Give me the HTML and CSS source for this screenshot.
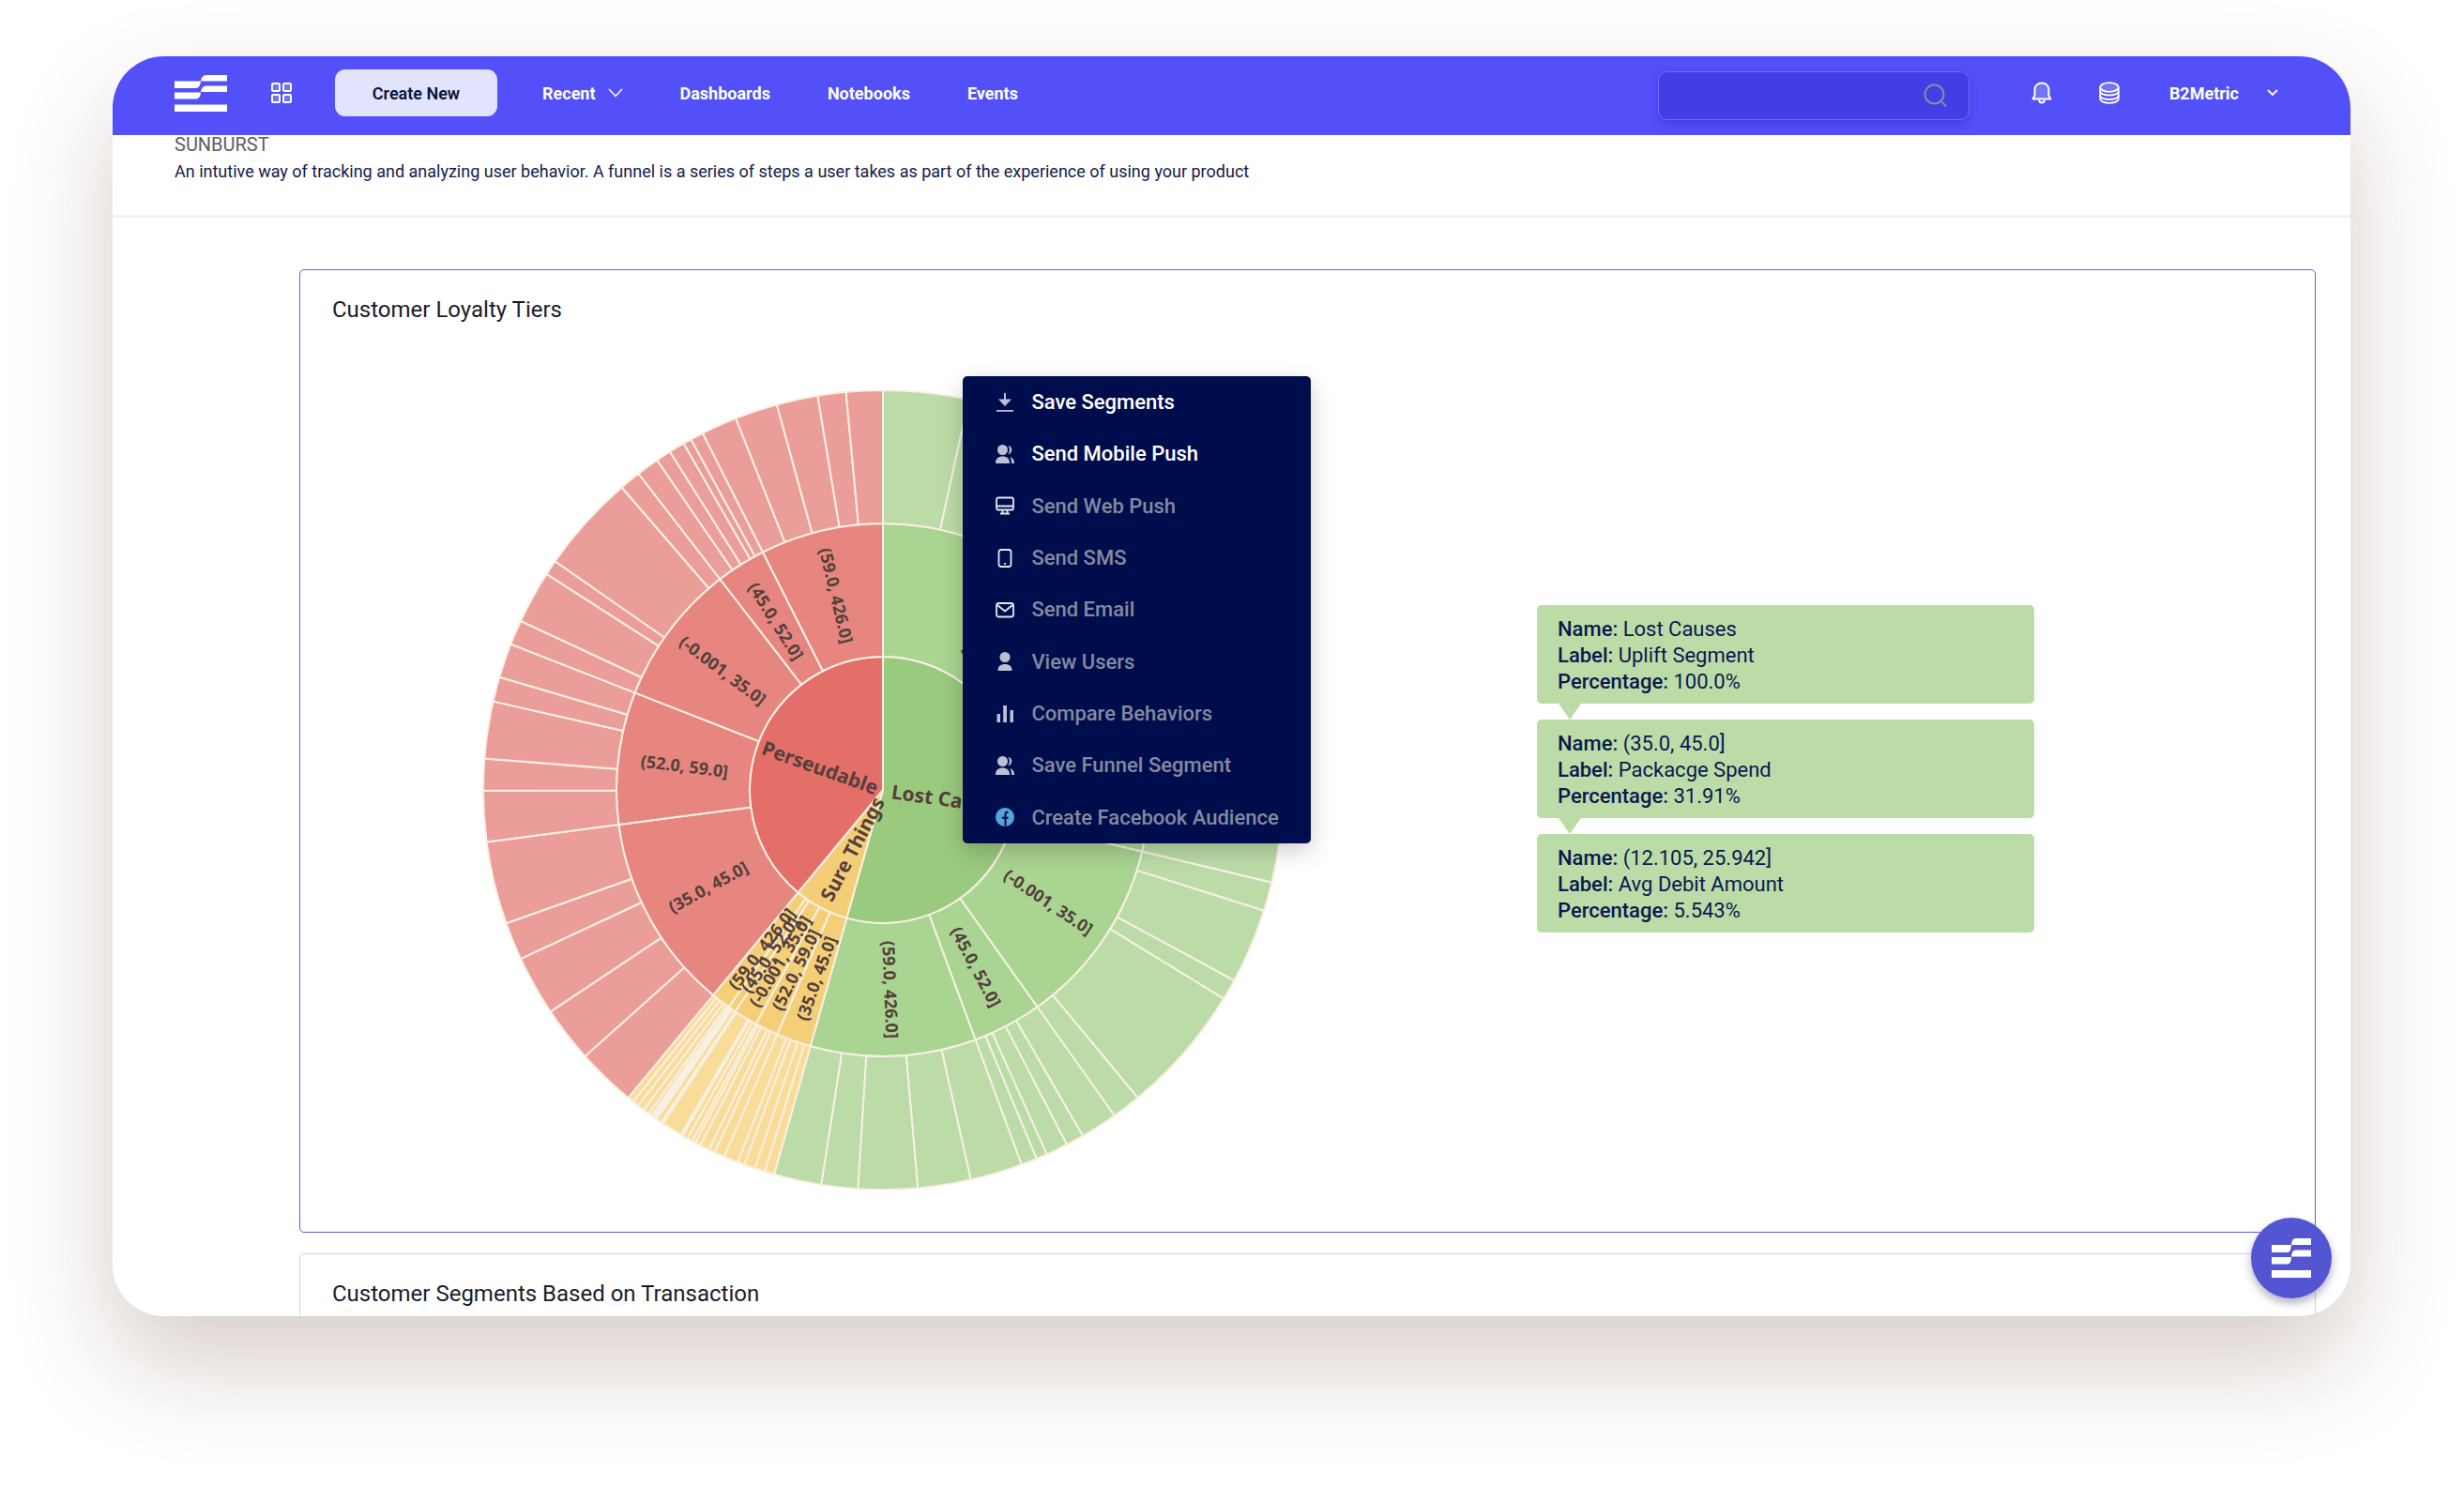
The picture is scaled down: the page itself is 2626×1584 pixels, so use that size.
FILE: index.html
```html
<!DOCTYPE html>
<html lang="en">
<head>
  <meta charset="UTF-8">
  <meta name="viewport" content="width=device-width, initial-scale=1.0">
  <title>Sunburst</title>
  <link rel="stylesheet" href="styles.css">
</head>
<body>

  <!-- Logo shape, used in the header and on the round button -->
  <svg class="defs" width="0" height="0" aria-hidden="true">
    <symbol id="logo" viewBox="0 0 56 39" preserveAspectRatio="none">
      <path d="M34 0H56V6.500H28C28.500 3 30 0 34 0Z"/>
      <path d="M0 6.500H28C27.500 11 26 14 22 14H0Z"/>
      <path d="M34 11.500H56V18H28C28.500 14.500 30 11.500 34 11.500Z"/>
      <path d="M0 18.500H28C27.500 23 26 25.500 22 25.500H0Z"/>
      <path d="M0 31.500H56V39H0Z"/>
    </symbol>
    <symbol id="people" viewBox="0 0 20 20">
      <circle cx="7.500" cy="5.500" r="5.500"/>
      <path d="M0 20C0 14.500 3 12.500 7.500 12.500S15 14.500 15 20Z"/>
      <path d="M13.500 1C18.500 1.500 18.500 9.500 13.500 10.300C15.300 7 15.300 4 13.500 1Z"/>
      <path d="M15.500 13C18.500 14 20 16 20 20H17C17 17 16.700 15 15.500 13Z"/>
    </symbol>
  </svg>

  <div class="window">
    <header class="topbar">
      <a href="#" class="logo" aria-label="Home"><svg width="56" height="39"><use href="#logo"/></svg></a>
      <button class="icon-button apps" aria-label="Apps">
        <svg width="22" height="22" viewBox="0 0 22 22" fill="#7574f8" stroke="#fff" stroke-width="2">
          <rect x="1" y="1" width="8" height="8" rx="1"/>
          <rect x="13" y="1" width="8" height="8" rx="1"/>
          <rect x="1" y="13" width="8" height="8" rx="1"/>
          <rect x="13" y="13" width="8" height="8" rx="1"/>
        </svg>
      </button>
      <button class="create-button">Create New</button>
      <nav class="nav">
        <a href="#">Recent
          <svg width="16" height="10" viewBox="0 0 16 10" fill="none" stroke="#fff" stroke-width="1.500"><path d="M1 1L8 8.500L15 1"/></svg>
        </a>
        <a href="#">Dashboards</a>
        <a href="#">Notebooks</a>
        <a href="#">Events</a>
      </nav>
      <div class="search">
        <input type="text" aria-label="Search">
        <svg width="26" height="26" viewBox="0 0 26 26" fill="none" stroke="#8a8a9c" stroke-width="2"><circle cx="11.500" cy="11.500" r="10"/><path d="M18.500 18.500L24 24.500"/></svg>
      </div>
      <button class="icon-button bell" aria-label="Notifications">
        <svg width="22" height="24" viewBox="0 0 22 24" fill="none" stroke="#fff" stroke-width="2" stroke-linejoin="round">
          <path fill="#7574f8" d="M1.500 18.500H20.500L18.500 15V9C18.500 4 15 1.500 11 1.500S3.500 4 3.500 9V15Z"/>
          <path d="M8 19.500C8.500 23.500 13.500 23.500 14 19.500"/>
        </svg>
      </button>
      <button class="icon-button data" aria-label="Data">
        <svg width="22" height="24" viewBox="0 0 22 24" fill="none" stroke="#fff" stroke-width="1.800">
          <ellipse fill="#7574f8" cx="11" cy="6" rx="9.800" ry="4.800"/>
          <path d="M1.200 6V18C1.200 24.500 20.800 24.500 20.800 18V6"/>
          <path d="M1.200 10C1.200 16 20.800 16 20.800 10M1.200 14.500C1.200 20.500 20.800 20.500 20.800 14.500"/>
        </svg>
      </button>
      <button class="account">B2Metric
        <svg width="12" height="8" viewBox="0 0 12 8" fill="none" stroke="#fff" stroke-width="1.800"><path d="M1 1L6 6L11 1"/></svg>
      </button>
    </header>

    <section class="intro">
      <h1>SUNBURST</h1>
      <p>An intutive way of tracking and analyzing user behavior. A funnel is a series of steps a user takes as part of the experience of using your product</p>
    </section>

    <main class="content">
      <section class="card card-active">
        <h2>Customer Loyalty Tiers</h2>
        <div class="card-body">
          <div class="chart">
            <svg id="sunburst" viewBox="-427 -427 854 854"></svg>
            <div class="menu">
              <button><svg viewBox="0 0 20 20"><path d="M9 0H11V6.500H17L10 14L3 6.500H9Z M1 18H19V19.800H1Z"/></svg>Save Segments</button>
              <button><svg viewBox="0 0 20 20"><use href="#people"/></svg>Send Mobile Push</button>
              <button disabled><svg class="outline" viewBox="0 0 20 20"><rect x="1" y="1.500" width="18" height="13" rx="2"/><path d="M1 10.500H19M7.500 14.500V18.500M12.500 14.500V18.500M5 18.500H15"/></svg>Send Web Push</button>
              <button disabled><svg class="outline" viewBox="0 0 20 20"><rect x="3.500" y="1" width="13" height="18" rx="2.500"/><path d="M9 15.800H11"/></svg>Send SMS</button>
              <button disabled><svg class="outline" viewBox="0 0 20 20"><rect x="1" y="3" width="18" height="14.500" rx="2.500"/><path d="M2 5L10 11.500L18 5"/></svg>Send Email</button>
              <button disabled><svg viewBox="0 0 20 20"><circle cx="10" cy="5.500" r="5.500"/><path d="M2.500 20C2.500 15 5 13 10 13S17.500 15 17.500 20Z"/></svg>View Users</button>
              <button disabled><svg viewBox="0 0 20 20"><path d="M1.500 10H5V19H1.500Z M8.200 1H12V19H8.200Z M15.500 6H19V19H15.500Z"/></svg>Compare Behaviors</button>
              <button disabled><svg viewBox="0 0 20 20"><use href="#people"/></svg>Save Funnel Segment</button>
              <button disabled><svg class="facebook" viewBox="0 0 20 20"><circle cx="10" cy="10" r="10"/><path d="M13.500 4.800H12.300C11 4.800 10.500 5.500 10.500 6.700V19.500M6.800 10.800H13.500"/></svg>Create Facebook Audience</button>
            </div>
          </div>

          <div class="path">
            <div class="path-item">
              <p><b>Name:</b> Lost Causes</p>
              <p><b>Label:</b> Uplift Segment</p>
              <p><b>Percentage:</b> 100.0%</p>
            </div>
            <div class="path-item">
              <p><b>Name:</b> (35.0, 45.0]</p>
              <p><b>Label:</b> Packacge Spend</p>
              <p><b>Percentage:</b> 31.91%</p>
            </div>
            <div class="path-item">
              <p><b>Name:</b> (12.105, 25.942]</p>
              <p><b>Label:</b> Avg Debit Amount</p>
              <p><b>Percentage:</b> 5.543%</p>
            </div>
          </div>
        </div>
      </section>

      <section class="card">
        <h2>Customer Segments Based on Transaction</h2>
      </section>
    </main>

    <button class="help-button" aria-label="Help"><svg width="42" height="42"><use href="#logo"/></svg></button>
  </div>

  <script src="script.js"></script>
</body>
</html>
```
FILE: styles.css
```css
* {
  box-sizing: border-box;
}

body {
  margin: 0;
  background-color: #fff;
  color: #1c1c28;
  font-family: Roboto, "Liberation Sans", sans-serif;
}

h1, h2, p {
  margin: 0;
  font-weight: 400;
}

button {
  border: none;
  background: none;
  padding: 0;
  font-family: inherit;
  cursor: pointer;
}

.defs {
  position: absolute;
}

.window {
  position: relative;
  height: calc(100vh - 241px);
  margin: 60px 121px 181px 120px;
  overflow: hidden;
  border-radius: 55px;
  background-color: #fff;
  box-shadow: 0 50px 110px rgba(85, 40, 20, 0.23);
}

/* Top bar */
.topbar {
  display: flex;
  align-items: center;
  height: 84px;
  padding: 0 77px 6px 66px;
  background-color: #5350fa;
  color: #fff;
}

.topbar svg {
  display: block;
}

.logo {
  fill: #fff;
}

.apps {
  margin-left: 47px;
}

.create-button {
  width: 173px;
  height: 50px;
  margin-left: 46px;
  border-radius: 11px;
  background-color: #e1e4fc;
  color: #0a1440;
  font-size: 18px;
  font-weight: 600;
}

.nav {
  display: flex;
  gap: 61px;
  margin-left: 48px;
}

.nav a {
  display: flex;
  align-items: center;
  gap: 13px;
  color: #fff;
  font-size: 18px;
  font-weight: 700;
  text-decoration: none;
}

.search {
  display: flex;
  align-items: center;
  width: 332px;
  height: 52px;
  margin-top: 6px;
  margin-left: auto;
  padding-right: 22px;
  border: 1px solid #706ef8;
  border-radius: 10px;
  background-color: #413ee6;
  box-shadow: 0 4px 10px rgba(40, 36, 190, 0.4);
}

.search input {
  flex: 1;
  min-width: 0;
  height: 100%;
  padding: 0 16px;
  border: none;
  outline: none;
  background: none;
  color: #fff;
  font: inherit;
  font-size: 18px;
}

.bell {
  margin-left: 66px;
}

.data {
  margin-left: 50px;
}

.account {
  display: flex;
  align-items: center;
  gap: 30px;
  margin-left: 53px;
  color: #fff;
  font-size: 18px;
  font-weight: 700;
}

/* Page intro */
.intro {
  padding: 0 66px 32px;
  border-bottom: 3px solid #f2f2ee;
}

.intro h1 {
  color: #5c5c66;
  font-size: 20px;
  line-height: 20px;
}

.intro p {
  padding-top: 5px;
  color: #141c4c;
  font-size: 18px;
  line-height: 28px;
}

/* Cards */
.content {
  display: flex;
  flex-direction: column;
  gap: 22px;
  padding: 55px 37px 0 199px;
}

.card {
  padding: 27px 34px 44px;
  border: 1px solid #ccd4ea;
  border-radius: 5px;
}

.card-active {
  border-color: #5f5ef4;
}

.card h2 {
  font-size: 24px;
  line-height: 30px;
}

.card-body {
  display: flex;
  align-items: center;
  gap: 270px;
  padding-top: 70px;
  padding-left: 160px;
}

.chart {
  position: relative;
  flex: 0 1 854px;
}

.chart svg {
  display: block;
}

.chart text {
  font-family: "Noto Sans", "Open Sans", sans-serif;
  font-size: 18px;
  font-weight: 700;
  fill: #54403c;
  text-anchor: middle;
  dominant-baseline: central;
}

.chart .root-label {
  font-size: 21px;
}

.slice {
  stroke: #f8f0e4;
  stroke-width: 2;
}

/* Context menu over the chart */
.menu {
  position: absolute;
  top: -14px;
  left: 60%;
  display: grid;
  grid-auto-rows: 1fr;
  width: 371px;
  height: 498px;
  border-radius: 5px;
  background-color: #000d4c;
  box-shadow: 0 8px 24px rgba(0, 0, 0, 0.2);
}

.menu button {
  display: flex;
  align-items: center;
  gap: 18px;
  padding-left: 35px;
  color: #fff;
  font-size: 22px;
  font-weight: 500;
}

.menu button:disabled {
  color: #838aa0;
}

.menu svg {
  width: 20px;
  height: 20px;
  fill: #bcc0d4;
}

.menu .outline {
  fill: none;
  stroke: #e4e6f0;
  stroke-width: 1.8;
}

.menu .facebook {
  fill: #5aa2dc;
}

.menu .facebook path {
  fill: none;
  stroke: #000d4c;
  stroke-width: 2;
}

/* Selected path */
.path {
  display: flex;
  flex: 0 1 530px;
  flex-direction: column;
  gap: 17px;
  margin-bottom: 45px;
}

.path-item {
  position: relative;
  padding: 12px 22px 9px;
  border-radius: 5px;
  background-color: #bbdca7;
  color: #0c1750;
  font-size: 22px;
  line-height: 28px;
}

.path-item b {
  font-weight: 500;
}

.path-item:not(:last-child)::after {
  content: "";
  position: absolute;
  top: 100%;
  left: 23px;
  border: 12px solid transparent;
  border-top: 17px solid #bbdca7;
  border-bottom: none;
}

/* Round help button */
.help-button {
  position: absolute;
  right: 20px;
  bottom: 19px;
  display: flex;
  align-items: center;
  justify-content: center;
  width: 86px;
  height: 86px;
  border-radius: 50%;
  background-color: #5455d2;
  fill: #fff;
  box-shadow: 0 5px 10px rgba(30, 30, 90, 0.35);
}
```
FILE: script.js
```
// Angles are in degrees, clockwise from the top
const rings = [0, 142, 284, 426];

const data = [
  {
    name: 'Lost Causes', start: 0, end: 195.8,
    colors: ['#9aca7d', '#aad491', '#bbdca7'],
    children: [
      { name: '(35.0, 45.0]', start: 0, end: 62.5, cuts: [12.4, 23.3, 40, 51] },
      { name: '(52.0, 59.0]', start: 62.5, end: 103.4, cuts: [70, 80, 90, 97] },
      { name: '(-0.001, 35.0]', start: 103.4, end: 144.6, cuts: [107.6, 118.5, 121.5, 140.4] },
      { name: '(45.0, 52.0]', start: 144.6, end: 159.7, cuts: [150, 152.6, 155.8, 157.4] },
      { name: '(59.0, 426.0]', start: 159.7, end: 195.8, cuts: [167.3, 175, 183.6, 188.9] }
    ]
  },
  {
    name: 'Sure Things', start: 195.8, end: 219.6,
    colors: ['#f4ce76', '#f5cf78', '#f9dc98'],
    children: [
      { name: '(35.0, 45.0]', start: 195.8, end: 203.4, cuts: [197.2, 198.7, 200.3, 201.3] },
      { name: '(52.0, 59.0]', start: 203.4, end: 208.5, cuts: [204.9, 205.8, 207.2, 208] },
      { name: '(-0.001, 35.0]', start: 208.5, end: 213.7, cuts: [209.3, 210.1, 210.4, 213.4] },
      { name: '(45.0, 52.0]', start: 213.7, end: 215.4, cuts: [214.5, 214.7, 214.9, 215.1] },
      { name: '(59.0, 426.0]', start: 215.4, end: 219.6, cuts: [215.9, 216.8, 217.8, 218.7] }
    ]
  },
  {
    name: 'Perseudable', start: 219.6, end: 360,
    colors: ['#e46e68', '#e7857f', '#eb9d99'],
    children: [
      { name: '(35.0, 45.0]', start: 219.6, end: 262.5, cuts: [228.2, 236.3, 245, 250.5] },
      { name: '(52.0, 59.0]', start: 262.5, end: 291.4, cuts: [269.9, 274.5, 282.8, 286.4] },
      { name: '(-0.001, 35.0]', start: 291.4, end: 322.3, cuts: [295, 302.7, 304.9, 319.2] },
      { name: '(45.0, 52.0]', start: 322.3, end: 333.2, cuts: [325.6, 327.8, 330.1, 331.3] },
      { name: '(59.0, 426.0]', start: 333.2, end: 360, cuts: [338.4, 344.6, 350.6, 354.7] }
    ]
  }
];

const chart = document.getElementById('sunburst');

function point(angle, radius) {
  const rad = angle * Math.PI / 180;
  return (radius * Math.sin(rad)).toFixed(2) + ' ' + (-radius * Math.cos(rad)).toFixed(2);
}

function add(tag, attrs) {
  const el = document.createElementNS('http://www.w3.org/2000/svg', tag);
  Object.keys(attrs).forEach(key => el.setAttribute(key, attrs[key]));
  chart.appendChild(el);
  return el;
}

function drawSlice(start, end, level, color) {
  const inner = rings[level];
  const outer = rings[level + 1];
  const large = end - start > 180 ? 1 : 0;
  const d = `M${point(start, inner)} L${point(start, outer)}` +
    ` A${outer} ${outer} 0 ${large} 1 ${point(end, outer)}` +
    ` L${point(end, inner)} A${inner} ${inner} 0 ${large} 0 ${point(start, inner)}Z`;
  add('path', { d: d, fill: color, class: 'slice' });
}

// Labels run along the radius and are flipped on the left half
function drawLabel(node, level) {
  const middle = (node.start + node.end) / 2;
  const radius = (rings[level] + rings[level + 1]) / 2;
  const turn = middle > 180 ? middle - 270 : middle - 90;
  const text = add('text', {
    transform: `translate(${point(middle, radius)}) rotate(${turn})`,
    class: level === 0 ? 'root-label' : 'label'
  });
  text.textContent = node.name;
}

data.forEach(root => {
  drawSlice(root.start, root.end, 0, root.colors[0]);
  root.children.forEach(child => {
    drawSlice(child.start, child.end, 1, root.colors[1]);
    const edges = [child.start, ...child.cuts, child.end];
    for (let i = 0; i < edges.length - 1; i++) {
      drawSlice(edges[i], edges[i + 1], 2, root.colors[2]);
    }
  });
});

data.forEach(root => {
  drawLabel(root, 0);
  root.children.forEach(child => drawLabel(child, 1));
});
```
